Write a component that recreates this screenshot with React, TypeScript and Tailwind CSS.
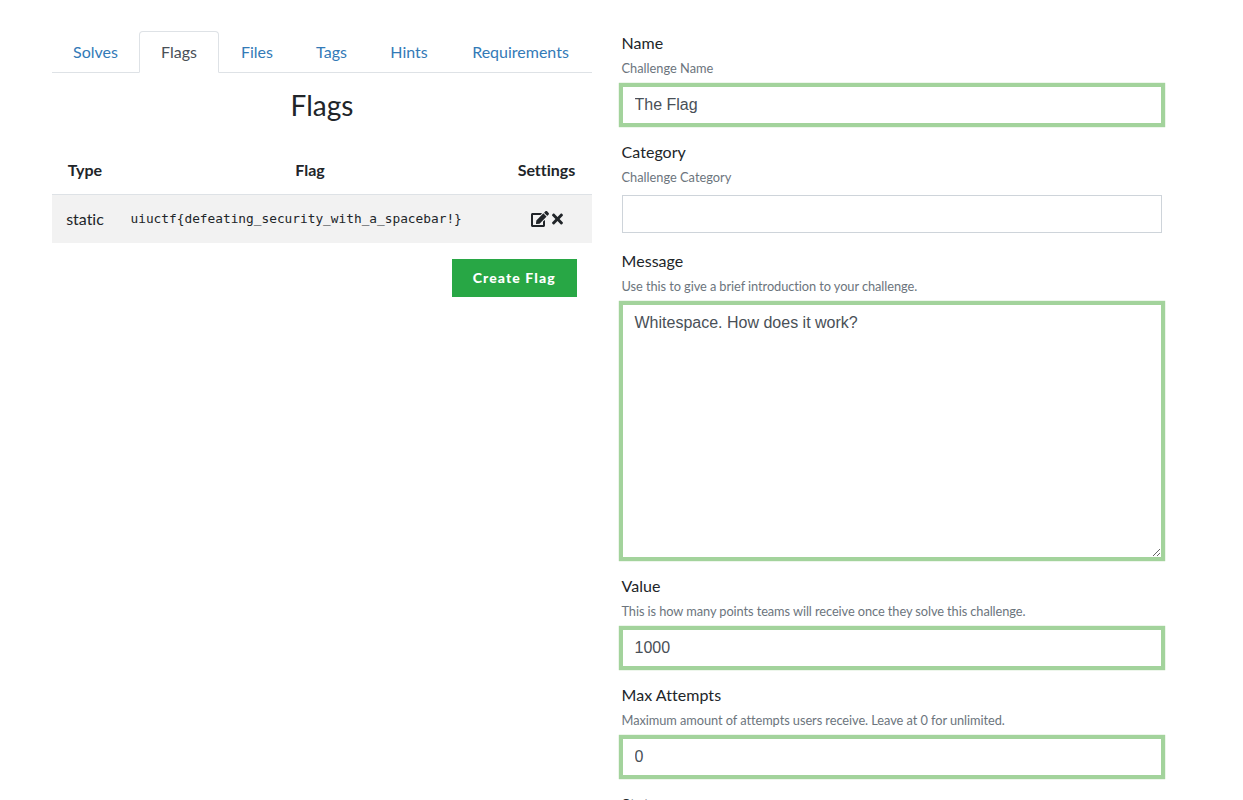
import { FaEdit, FaTimes } from "react-icons/fa";

const tabs = [
  { name: "Solves", width: "w-[87px]" },
  { name: "Flags", width: "w-[80px]" },
  { name: "Files", width: "w-[76px]" },
  { name: "Tags", width: "w-[73px]" },
  { name: "Hints", width: "w-[82px]" },
  { name: "Requirements", width: "w-[141px]" },
];

const control =
  "block w-full border pr-3 pl-[11.5px] py-1.5 font-['Liberation_Sans',Arial,sans-serif] text-base leading-6 text-[#495057] bg-white outline-none";
const valid = "border-[#a3d39c] shadow-[0_0_0_3.2px_#a3d39c]";
const plain = "border-[#ced4da]";

type FieldProps = {
  label: string;
  help: string;
  value: string;
  tracking?: string;
  multiline?: boolean;
};

function Field({ label, help, value, tracking = "", multiline }: FieldProps) {
  const state = value ? valid : plain;
  return (
    <div className="mb-4">
      <label className="-ml-[0.5px] flex h-[55px] flex-col whitespace-nowrap">
        <span className="h-[25px] text-base leading-[23px] tracking-[0.05px]">{label}</span>
        <span className={`text-[12.8px] leading-6 text-[#6c757d] ${tracking}`}>{help}</span>
      </label>
      {multiline ? (
        <textarea className={`${control} ${state} h-[254px] resize`} defaultValue={value} />
      ) : (
        <input className={`${control} ${state} h-[38px]`} defaultValue={value} />
      )}
    </div>
  );
}

export default function App() {
  return (
    <div className="flex h-[800px] w-[1243px] gap-[30px] overflow-hidden bg-white pl-[52px] pt-[31px] font-[Lato,sans-serif] text-base text-[#212529] [font-variant-ligatures:none]">
      <section className="w-[540px] shrink-0">
        <nav className="flex h-[42px] border-b border-[#dee2e6]">
          {tabs.map((tab) => (
            <a
              key={tab.name}
              className={`${tab.width} h-[42px] shrink-0 border text-center leading-[39px] ${
                tab.name === "Flags"
                  ? "rounded-t border-[#dee2e6] border-b-white bg-white text-[#495057]"
                  : "border-transparent text-[#337ab7]"
              }`}
            >
              {tab.name}
            </a>
          ))}
        </nav>
        <h3 className="mt-[14px] h-[37px] text-center text-[28px] leading-[36px]">Flags</h3>
        <table className="mt-[22px] w-full table-fixed border-collapse text-center">
          <colgroup>
            <col className="w-[66px]" />
            <col className="w-[384px]" />
            <col className="w-[90px]" />
          </colgroup>
          <thead>
            <tr className="h-[48px] border-b border-[#dee2e6] font-bold">
              <th>Type</th>
              <th>Flag</th>
              <th className="pr-px">Settings</th>
            </tr>
          </thead>
          <tbody>
            <tr className="h-[49px] bg-[#f2f2f2]">
              <td>static</td>
              <td className="pl-[12.5px] text-left">
                <code className="block font-['DejaVu_Sans_Mono',monospace] text-[12.8px] leading-5">
                  {"uiuctf{defeating_security_with_a_spacebar!}"}
                </code>
              </td>
              <td>
                <span className="flex items-center justify-center gap-[2px]">
                  <FaEdit className="h-4 w-[18px]" />
                  <FaTimes className="h-4 w-[13px]" />
                </span>
              </td>
            </tr>
          </tbody>
        </table>
        <div className="mt-4 flex justify-end pr-[15px]">
          <button className="h-[38px] w-[125px] bg-[#28a745] pr-[0.5px] text-sm font-black tracking-[1.1px] text-white">
            Create Flag
          </button>
        </div>
      </section>
      <form className="w-[540px] shrink-0">
        <Field label="Name" help="Challenge Name" value="The Flag" />
        <Field label="Category" help="Challenge Category" value="" />
        <Field
          label="Message"
          help="Use this to give a brief introduction to your challenge."
          value="Whitespace. How does it work?"
          tracking="tracking-[-0.07px]"
          multiline
        />
        <Field
          label="Value"
          help="This is how many points teams will receive once they solve this challenge."
          value="1000"
          tracking="tracking-[-0.08px]"
        />
        <Field
          label="Max Attempts"
          help="Maximum amount of attempts users receive. Leave at 0 for unlimited."
          value="0"
          tracking="tracking-[-0.06px]"
        />
        <div className="-ml-[0.5px] h-[25px] leading-[23px]">State</div>
      </form>
    </div>
  );
}
